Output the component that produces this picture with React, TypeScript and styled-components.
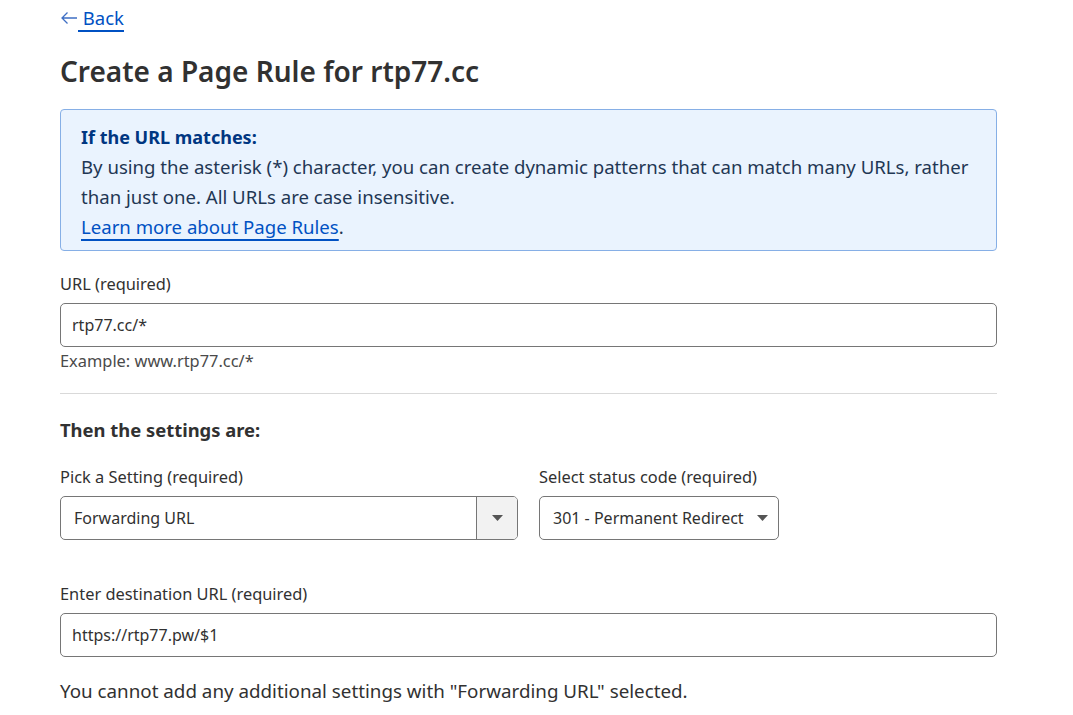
import React from "react";
import styled, { createGlobalStyle } from "styled-components";

const GlobalStyle = createGlobalStyle`
  body {
    margin: 0;
    background: #fff;
    font-family: "Noto Sans", "Open Sans", sans-serif;
    color: #313131;
  }
`;

const Page = styled.main`
  width: 937px;
  padding: 4px 0 0 60px;
`;

const BackLink = styled.a`
  display: inline-flex;
  align-items: center;
  font-size: 18.5px;
  line-height: 28px;
  color: #0051c3;
  text-decoration: none;
  span {
    text-decoration: underline;
    text-decoration-thickness: 2px;
    text-underline-offset: 5px;
    white-space: pre;
  }
`;

const Title = styled.h1`
  margin: 21px 0 20px;
  font-size: 28px;
  line-height: 36px;
  font-weight: 600;
  color: #313131;
`;

const InfoBox = styled.div`
  background: #eaf3fe;
  border: 1px solid #86afe6;
  border-radius: 4px;
  padding: 12px 20px 8px;
  font-size: 18.6px;
  line-height: 30px;
  color: #1f3754;
`;

const InfoTitle = styled.div`
  font-weight: 700;
  font-size: 18px;
  color: #003681;
`;

const InlineLink = styled.a`
  color: #0051c3;
  text-decoration: underline;
  text-decoration-thickness: 2px;
  text-underline-offset: 5px;
`;

const Field = styled.div<{ $top?: number }>`
  display: flex;
  flex-direction: column;
  margin-top: ${(p) => p.$top ?? 0}px;
`;

const Label = styled.label`
  font-size: 16.4px;
  line-height: 22px;
  margin-bottom: 8px;
  color: #313131;
`;

const TextInput = styled.div`
  height: 44px;
  box-sizing: border-box;
  border: 1px solid #767676;
  border-radius: 5px;
  padding: 0 11px;
  display: flex;
  align-items: center;
  font-size: 16px;
  color: #313131;
`;

const Hint = styled.div`
  font-size: 16.4px;
  line-height: 22px;
  margin-top: 3px;
  color: #4a4a4a;
`;

const Divider = styled.hr`
  border: none;
  border-top: 1px solid #d9d9d9;
  margin: 21px 0 23px;
`;

const SectionTitle = styled.h2`
  margin: 0 0 23px;
  font-size: 18.4px;
  line-height: 26px;
  font-weight: 700;
  color: #313131;
`;

const Row = styled.div`
  display: flex;
  gap: 21px;
  align-items: flex-start;
`;

const SelectBox = styled.div<{ $width: number }>`
  width: ${(p) => p.$width}px;
  height: 44px;
  box-sizing: border-box;
  border: 1px solid #767676;
  border-radius: 5px;
  display: flex;
  align-items: stretch;
  overflow: hidden;
  font-size: 16px;
  color: #313131;
`;

const SelectValue = styled.div`
  flex: 1;
  display: flex;
  align-items: center;
  padding: 0 13px;
  white-space: nowrap;
`;

const ArrowCell = styled.div`
  width: 40px;
  border-left: 1px solid #767676;
  background: #f2f2f2;
  display: flex;
  align-items: center;
  justify-content: center;
`;

const InlineArrow = styled.div`
  display: flex;
  align-items: center;
  padding-right: 12px;
`;

const Note = styled.p`
  margin: 21px 0 0;
  font-size: 18.8px;
  line-height: 26px;
  color: #313131;
`;

const Caret = () => (
  <svg width="11" height="6" viewBox="0 0 11 6">
    <path d="M0 0h11L5.5 6z" fill="#555" />
  </svg>
);

export default function App() {
  return (
    <>
      <GlobalStyle />
      <Page>
        <BackLink href="#">
          <svg width="18" height="14" viewBox="0 0 18 14">
            <path d="M17 7H2M7.5 1.5L2 7l5.5 5.5" fill="none" stroke="#3f6fc4" strokeWidth="1.3" />
          </svg>
          <span> Back</span>
        </BackLink>
        <Title>Create a Page Rule for rtp77.cc</Title>
        <InfoBox>
          <InfoTitle>If the URL matches:</InfoTitle>
          <div>
            By using the asterisk (*) character, you can create dynamic patterns that can match many URLs, rather
            than just one. All URLs are case insensitive.
          </div>
          <div>
            <InlineLink href="#">Learn more about Page Rules</InlineLink>.
          </div>
        </InfoBox>
        <Field $top={22}>
          <Label>URL (required)</Label>
          <TextInput>rtp77.cc/*</TextInput>
          <Hint>Example: www.rtp77.cc/*</Hint>
        </Field>
        <Divider />
        <SectionTitle>Then the settings are:</SectionTitle>
        <Row>
          <Field>
            <Label>Pick a Setting (required)</Label>
            <SelectBox $width={458}>
              <SelectValue>Forwarding URL</SelectValue>
              <ArrowCell>
                <Caret />
              </ArrowCell>
            </SelectBox>
          </Field>
          <Field>
            <Label>Select status code (required)</Label>
            <SelectBox $width={240}>
              <SelectValue>301 - Permanent Redirect</SelectValue>
              <InlineArrow>
                <Caret />
              </InlineArrow>
            </SelectBox>
          </Field>
        </Row>
        <Field $top={43}>
          <Label>Enter destination URL (required)</Label>
          <TextInput>https://rtp77.pw/$1</TextInput>
        </Field>
        <Note>You cannot add any additional settings with "Forwarding URL" selected.</Note>
      </Page>
    </>
  );
}
